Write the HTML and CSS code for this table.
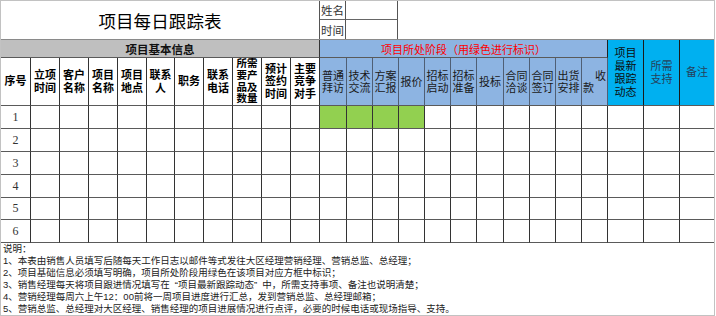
FILE: index.html
```html
<!DOCTYPE html>
<html lang="zh-CN">
<head>
<meta charset="utf-8">
<title>项目每日跟踪表</title>
<link rel="stylesheet" href="styles.css">
</head>
<body>
<div class="sheet">
  <div class="top">
    <div class="title">项目每日跟踪表</div>
    <div class="meta">
      <span class="lab r1">姓名</span><span class="val r1"></span>
      <span class="lab">时间</span><span class="val"></span>
    </div>
  </div>
  <div class="grid">
    <div class="band-basic">项目基本信息</div>
    <div class="band-stage">项目所处阶段（用绿色进行标识）</div>
    <div class="cy">项目<br>最新<br>跟踪<br>动态</div>
    <div class="cy soft">所需<br>支持</div>
    <div class="cy soft l">备注</div>

    <div class="h">序号</div>
    <div class="h">立项<br>时间</div>
    <div class="h">客户<br>名称</div>
    <div class="h">项目<br>名称</div>
    <div class="h">项目<br>地点</div>
    <div class="h">联系<br>人</div>
    <div class="h">职务</div>
    <div class="h">联系<br>电话</div>
    <div class="h h4">所需<br>要产<br>品及<br>数量</div>
    <div class="h">预计<br>签约<br>时间</div>
    <div class="h">主要<br>竞争<br>对手</div>
    <div class="s">普通<br>拜访</div>
    <div class="s">技术<br>交流</div>
    <div class="s">方案<br>汇报</div>
    <div class="s">报价</div>
    <div class="s">招标<br>启动</div>
    <div class="s">招标<br>准备</div>
    <div class="s">投标</div>
    <div class="s">合同<br>洽谈</div>
    <div class="s">合同<br>签订</div>
    <div class="s">出货<br>安排</div>
    <div class="s sk"><span class="sk1">收</span><span class="sk2">款</span></div>

    <div class="n">1</div><i></i><i></i><i></i><i></i><i></i><i></i><i></i><i></i><i></i><i></i><i class="g"></i><i class="g"></i><i class="g"></i><i class="g"></i><i></i><i></i><i></i><i></i><i></i><i></i><i></i><i></i><i></i><i class="l"></i>
    <div class="n">2</div><i></i><i></i><i></i><i></i><i></i><i></i><i></i><i></i><i></i><i></i><i></i><i></i><i></i><i></i><i></i><i></i><i></i><i></i><i></i><i></i><i></i><i></i><i></i><i class="l"></i>
    <div class="n">3</div><i></i><i></i><i></i><i></i><i></i><i></i><i></i><i></i><i></i><i></i><i></i><i></i><i></i><i></i><i></i><i></i><i></i><i></i><i></i><i></i><i></i><i></i><i></i><i class="l"></i>
    <div class="n">4</div><i></i><i></i><i></i><i></i><i></i><i></i><i></i><i></i><i></i><i></i><i></i><i></i><i></i><i></i><i></i><i></i><i></i><i></i><i></i><i></i><i></i><i></i><i></i><i class="l"></i>
    <div class="n">5</div><i></i><i></i><i></i><i></i><i></i><i></i><i></i><i></i><i></i><i></i><i></i><i></i><i></i><i></i><i></i><i></i><i></i><i></i><i></i><i></i><i></i><i></i><i></i><i class="l"></i>
    <div class="n">6</div><i></i><i></i><i></i><i></i><i></i><i></i><i></i><i></i><i></i><i></i><i></i><i></i><i></i><i></i><i></i><i></i><i></i><i></i><i></i><i></i><i></i><i></i><i></i><i class="l"></i>
  </div>
  <div class="notes">
    <p>说明：</p>
    <p>1、本表由销售人员填写后随每天工作日志以邮件等式发往大区经理营销经理、营销总监、总经理；</p>
    <p>2、项目基础信息必须填写明确，项目所处阶段用绿色在该项目对应方框中标识；</p>
    <p>3、销售经理每天将项目跟进情况填写在<span class="qo">“</span>项目最新跟踪动态<span class="qc">”</span>中，所需支持事项、备注也说明清楚；</p>
    <p>4、营销经理每周六上午12：00前将一周项目进度进行汇总，发到营销总监、总经理邮箱；</p>
    <p>5、营销总监、总经理对大区经理、销售经理的项目进展情况进行点评，必要的时候电话或现场指导、支持。</p>
  </div>
</div>
</body>
</html>
```
FILE: styles.css
```css
body {
  margin: 0;
  background: #ffffff;
}

.sheet {
  width: 715px;
  height: 316px;
  box-sizing: border-box;
  border: 1px solid #c2c2c2;
  font-family: "Liberation Sans", "Noto Sans CJK SC", sans-serif;
  color: #000;
  overflow: hidden;
  background: #fff;
}

.top {
  display: flex;
  height: 39px;
  box-sizing: border-box;
  border-bottom: 1px solid #8a8a8a;
}

.title {
  width: 319px;
  box-sizing: border-box;
  border-right: 1px solid #555;
  display: flex;
  align-items: center;
  justify-content: center;
  font-size: 17.5px;
  letter-spacing: 0.1px;
}

.meta {
  display: grid;
  grid-template-columns: 26px 52px;
  grid-template-rows: 19px 19px;
}

.meta span {
  box-sizing: border-box;
  border-right: 1px solid #555;
  display: flex;
  align-items: center;
  padding-left: 1px;
  font-size: 11.5px;
  color: #333;
}

.meta .r1 {
  border-bottom: 1px solid #666;
}

.grid {
  display: grid;
  grid-template-columns:
    30px 29px 29px 29px 29px 28px 29px 29px 29px 29px 29px
    27px 26px 26px 26px 26px 26px 27px 26px 26px 26px 26px
    36px 36px 34px;
  grid-template-rows: 18px 48px 23px 23px 23px 23px 22px 23px;
}

.grid > * {
  box-sizing: border-box;
  border-right: 1px solid #333;
  border-bottom: 1px solid #5a5a5a;
  display: flex;
  align-items: center;
  justify-content: center;
  text-align: center;
  overflow: hidden;
  font-style: normal;
}

.grid > .l {
  border-right: none;
}

.band-basic {
  grid-column: span 11;
  background: #bfbfbf;
  font-weight: bold;
  font-size: 11.5px;
  color: #111;
}

.band-stage {
  grid-column: span 11;
  background: #8db4e2;
  color: #ff0000;
  font-size: 11px;
  border-right-color: #222;
}

.cy {
  grid-row: span 2;
  background: #00b0f0;
  font-size: 11px;
  line-height: 13px;
  color: #0d0d0d;
  border-right-color: #1a1a1a !important;
}

.cy.soft {
  color: #25405a;
}

.h {
  font-weight: bold;
  font-size: 11px;
  line-height: 12.5px;
  color: #000;
}

.h4 {
  font-size: 10.5px;
  line-height: 11.75px;
}

.s {
  background: #8db4e2;
  font-size: 11px;
  line-height: 12.5px;
  color: #1a1a1a;
  border-right-color: #4f5f75 !important;
  padding-top: 1px;
}

.sk {
  flex-direction: column;
  align-items: stretch !important;
}

.sk1 {
  text-align: right;
  padding-right: 1px;
}

.sk2 {
  text-align: left;
  padding-left: 1px;
}

.n {
  font-family: "Liberation Serif", serif;
  font-size: 12px;
  color: #333;
}

.g {
  background: #92d050;
}

.notes {
  font-size: 9.5px;
  line-height: 12px;
  padding-left: 2px;
  color: #222;
  white-space: nowrap;
}

.notes p {
  margin: 0;
}

.qo {
  margin-left: 5px;
}

.qc {
  margin-right: 5px;
}
```
